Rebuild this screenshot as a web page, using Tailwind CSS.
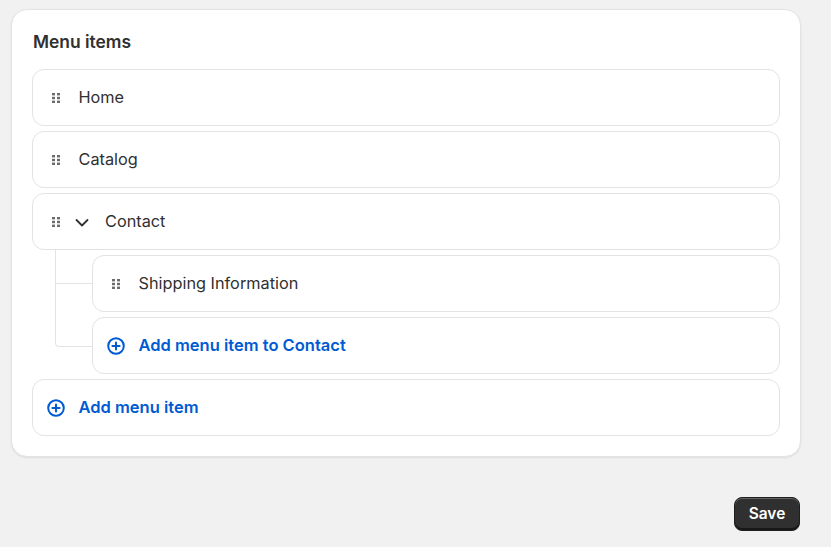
<html lang="en">
<head>
	<meta charset="UTF-8">
	<title>Menu items</title>
	<script src="https://cdn.jsdelivr.net/npm/@tailwindcss/browser@4"></script>
</head>
<body class="w-[831px] h-[547px] overflow-hidden bg-[#f1f1f1] font-['Inter',sans-serif] text-[#303030]">
	<div class="pt-[9px] pl-[11px] w-[801px]">
		<div class="h-[448px] rounded-2xl bg-white border border-[#e3e3e3] shadow-[0_1px_2px_rgba(0,0,0,0.08)] px-5 pt-5">
			<h2 class="pl-px text-[17.4px] leading-6 font-semibold">Menu items</h2>
			<div class="mt-[15px] flex flex-col gap-[5px]">
				<div class="h-[57px] flex items-center rounded-xl border border-[#e3e3e3] pl-[18px]">
					<svg class="w-[10px] h-[12px] text-[#6b6b6b]" viewBox="0 0 10 12" fill="currentColor"><rect x="1" y="1" width="3" height="2.4"/><rect x="6" y="1" width="3" height="2.4"/><rect x="1" y="4.8" width="3" height="2.4"/><rect x="6" y="4.8" width="3" height="2.4"/><rect x="1" y="8.6" width="3" height="2.4"/><rect x="6" y="8.6" width="3" height="2.4"/></svg>
					<span class="ml-[17.5px] pb-px text-[16.3px]">Home</span>
				</div>
				<div class="h-[57px] flex items-center rounded-xl border border-[#e3e3e3] pl-[18px]">
					<svg class="w-[10px] h-[12px] text-[#6b6b6b]" viewBox="0 0 10 12" fill="currentColor"><rect x="1" y="1" width="3" height="2.4"/><rect x="6" y="1" width="3" height="2.4"/><rect x="1" y="4.8" width="3" height="2.4"/><rect x="6" y="4.8" width="3" height="2.4"/><rect x="1" y="8.6" width="3" height="2.4"/><rect x="6" y="8.6" width="3" height="2.4"/></svg>
					<span class="ml-[17.5px] pb-px text-[16.3px]">Catalog</span>
				</div>
				<div class="h-[57px] flex items-center rounded-xl border border-[#e3e3e3] pl-[18px]">
					<svg class="w-[10px] h-[12px] text-[#6b6b6b]" viewBox="0 0 10 12" fill="currentColor"><rect x="1" y="1" width="3" height="2.4"/><rect x="6" y="1" width="3" height="2.4"/><rect x="1" y="4.8" width="3" height="2.4"/><rect x="6" y="4.8" width="3" height="2.4"/><rect x="1" y="8.6" width="3" height="2.4"/><rect x="6" y="8.6" width="3" height="2.4"/></svg>
					<svg class="ml-[13px] w-[16px] h-[14px]" viewBox="0 0 16 14" fill="none" stroke="#303030" stroke-width="1.8" stroke-linecap="round" stroke-linejoin="round"><path d="M2.5 5 8 10.5 13.5 5"/></svg>
					<span class="ml-[15px] pb-px text-[16.3px]">Contact</span>
				</div>
				<div class="relative pl-[60px] flex flex-col gap-[5px]">
					<div class="absolute left-[23px] -top-[5px] w-[37px] h-[97px] border-l border-b border-[#e3e3e3] rounded-bl"></div>
					<div class="absolute left-[23px] top-[28px] w-[37px] border-t border-[#e3e3e3]"></div>
					<div class="h-[57px] flex items-center rounded-xl border border-[#e3e3e3] pl-[18px] bg-white relative">
						<svg class="w-[10px] h-[12px] text-[#6b6b6b]" viewBox="0 0 10 12" fill="currentColor"><rect x="1" y="1" width="3" height="2.4"/><rect x="6" y="1" width="3" height="2.4"/><rect x="1" y="4.8" width="3" height="2.4"/><rect x="6" y="4.8" width="3" height="2.4"/><rect x="1" y="8.6" width="3" height="2.4"/><rect x="6" y="8.6" width="3" height="2.4"/></svg>
						<span class="ml-[17.5px] pb-px text-[16.3px]">Shipping Information</span>
					</div>
					<div class="h-[57px] flex items-center rounded-xl border border-[#e3e3e3] pl-[14px] bg-white relative">
						<svg class="w-[18px] h-[18px]" viewBox="0 0 18 18" fill="none" stroke="#005bd3" stroke-width="2" stroke-linecap="round"><circle cx="9" cy="9" r="7.8"/><path d="M9 5.4v7.2M5.4 9h7.2"/></svg>
						<span class="ml-[13.5px] pb-px text-[16.5px] font-semibold text-[#005bd3]">Add menu item to Contact</span>
					</div>
				</div>
				<div class="h-[57px] flex items-center rounded-xl border border-[#e3e3e3] pl-[14px]">
					<svg class="w-[18px] h-[18px]" viewBox="0 0 18 18" fill="none" stroke="#005bd3" stroke-width="2" stroke-linecap="round"><circle cx="9" cy="9" r="7.8"/><path d="M9 5.4v7.2M5.4 9h7.2"/></svg>
					<span class="ml-[13.5px] pb-px text-[16.5px] font-semibold text-[#005bd3]">Add menu item</span>
				</div>
			</div>
		</div>
		<div class="mt-10 flex justify-end pr-px">
			<button class="w-[66px] h-[34px] rounded-lg bg-[#303030] text-white text-[15.5px] font-semibold border border-[#1f1f1f] shadow-[inset_0_1px_0_rgba(255,255,255,0.25),inset_0_-2px_0_rgba(0,0,0,0.5)]">Save</button>
		</div>
	</div>
</body>
</html>
